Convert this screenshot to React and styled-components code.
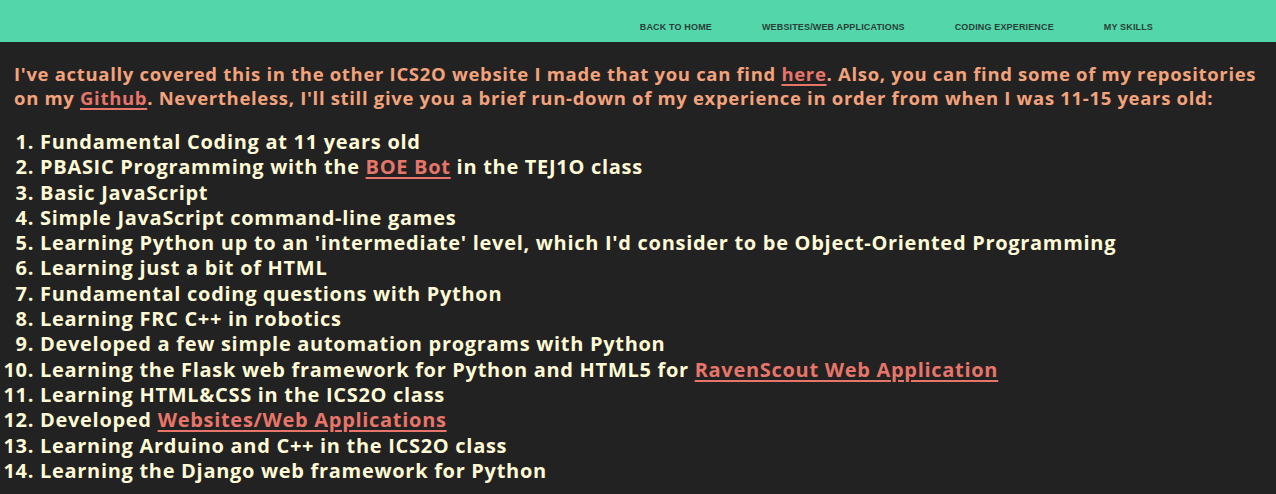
import React from "react";
import styled, { createGlobalStyle } from "styled-components";

const Global = createGlobalStyle`
  html, body { margin: 0; padding: 0; background: #222222; }
  body { font-family: "Open Sans", "Liberation Sans", sans-serif; }
`;

const Header = styled.header`
  height: 42px;
  background: #52d6aa;
  display: flex;
  justify-content: flex-end;
  align-items: flex-end;
  padding-right: 123px;
  box-sizing: border-box;
`;

const Nav = styled.nav`
  display: flex;
  gap: 50px;
  padding-bottom: 10px;
`;

const NavLink = styled.a`
  font-family: "Liberation Sans", Arial, sans-serif;
  font-weight: 700;
  font-size: 9px;
  letter-spacing: 0.15px;
  color: #2a3f37;
  text-decoration: none;
  text-transform: uppercase;
`;

const Main = styled.main`
  padding: 20px 0 0 14px;
`;

const Intro = styled.p`
  margin: 0;
  font-weight: 700;
  font-size: 18.5px;
  letter-spacing: 0.68px;
  line-height: 24px;
  color: #f4a27c;
`;

const Link = styled.a`
  color: #e8756a;
  text-decoration: underline;
  text-underline-offset: 3px;
  text-decoration-thickness: 2px;
`;

const List = styled.ol`
  margin: 19px 0 0 0;
  padding-left: 26px;
  font-weight: 700;
  font-size: 20px;
  letter-spacing: 0.7px;
  line-height: 25.3px;
  color: #fffad6;
`;

const Item = styled.li`
  padding-left: 0;
`;

const items = [
  ["Fundamental Coding at 11 years old"],
  ["PBASIC Programming with the ", { link: "BOE Bot" }, " in the TEJ1O class"],
  ["Basic JavaScript"],
  ["Simple JavaScript command-line games"],
  ["Learning Python up to an 'intermediate' level, which I'd consider to be Object-Oriented Programming"],
  ["Learning just a bit of HTML"],
  ["Fundamental coding questions with Python"],
  ["Learning FRC C++ in robotics"],
  ["Developed a few simple automation programs with Python"],
  ["Learning the Flask web framework for Python and HTML5 for ", { link: "RavenScout Web Application" }],
  ["Learning HTML&CSS in the ICS2O class"],
  ["Developed ", { link: "Websites/Web Applications" }],
  ["Learning Arduino and C++ in the ICS2O class"],
  ["Learning the Django web framework for Python"],
];

export default function App() {
  return (
    <>
      <Global />
      <Header>
        <Nav>
          <NavLink href="#">Back to Home</NavLink>
          <NavLink href="#">Websites/Web Applications</NavLink>
          <NavLink href="#">Coding Experience</NavLink>
          <NavLink href="#">My Skills</NavLink>
        </Nav>
      </Header>
      <Main>
        <Intro>
          I've actually covered this in the other ICS2O website I made that you can find{" "}
          <Link href="#">here</Link>. Also, you can find some of my repositories on my{" "}
          <Link href="#">Github</Link>. Nevertheless, I'll still give you a brief run-down of my
          experience in order from when I was 11-15 years old:
        </Intro>
        <List>
          {items.map((parts, i) => (
            <Item key={i}>
              {parts.map((p, j) =>
                typeof p === "string" ? (
                  <React.Fragment key={j}>{p}</React.Fragment>
                ) : (
                  <Link key={j} href="#">
                    {p.link}
                  </Link>
                )
              )}
            </Item>
          ))}
        </List>
      </Main>
    </>
  );
}
